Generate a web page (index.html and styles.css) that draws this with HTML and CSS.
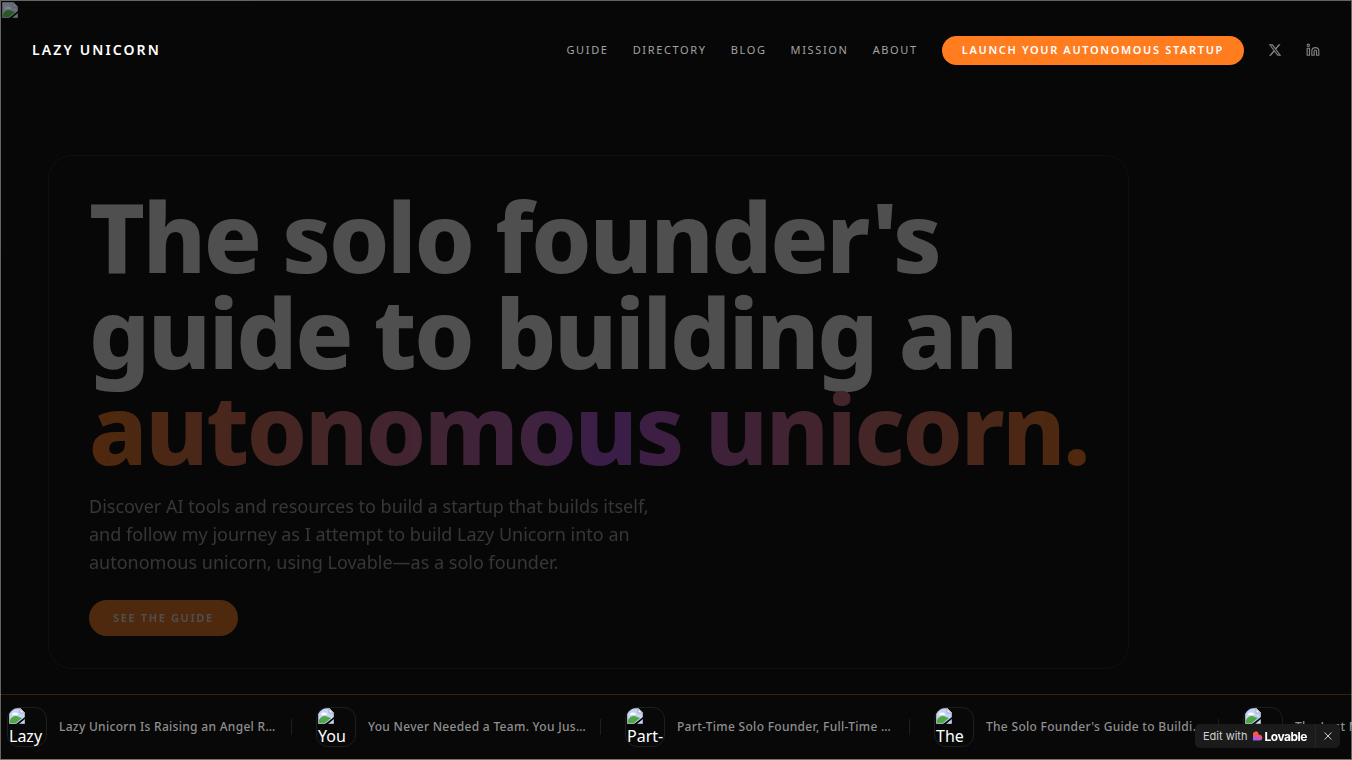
FILE: index.html
```
<!DOCTYPE html>
<html lang="en">
<head>
    <meta charset="UTF-8">
    <meta name="viewport" content="width=device-width, initial-scale=1.0">
    <title>Lazy Unicorn</title>
    <link rel="stylesheet" href="styles.css">
</head>
<body>

    <!-- Shared placeholder icon -->
    <svg class="defs" width="0" height="0" aria-hidden="true">
        <symbol id="broken" viewBox="0 0 16 16">
            <path d="M.5.5h11l4 4v11H.5z" fill="#c6d5f7" stroke="#a3abb8"/>
            <path d="M3 7c0-2 2-3 3-2 1-1 3 0 3 2z" fill="#fff"/>
            <path d="M1 15v-3c2-4 6-5 9-3l3 1-6 5z" fill="#4ea844"/>
            <path d="M11 .5V5h4.500z" fill="#fff" stroke="#a3abb8"/>
            <path d="M7 16 16 9v2l-6 5z" fill="#080808"/>
        </symbol>
    </svg>

    <div class="page">
        <div class="backdrop"><svg width="16" height="16"><use href="#broken"/></svg></div>

        <header class="header">
            <a class="logo" href="#">LAZY UNICORN</a>
            <nav class="nav">
                <a href="#">GUIDE</a>
                <a href="#">DIRECTORY</a>
                <a href="#">BLOG</a>
                <a href="#">MISSION</a>
                <a href="#">ABOUT</a>
                <button class="btn btn-launch">LAUNCH YOUR AUTONOMOUS STARTUP</button>
                <a class="social" href="#" aria-label="X">
                    <svg width="14" height="14" viewBox="0 0 24 24" fill="currentColor"><path d="M18.244 2.25h3.308l-7.227 8.26 8.502 11.24H16.17l-5.214-6.817L4.99 21.75H1.68l7.73-8.835L1.254 2.25H8.08l4.713 6.231zm-1.161 17.52h1.833L7.084 4.126H5.117z"/></svg>
                </a>
                <a class="social" href="#" aria-label="LinkedIn">
                    <svg width="14" height="14" viewBox="0 0 24 24" fill="none" stroke="currentColor" stroke-width="2" stroke-linecap="round" stroke-linejoin="round"><path d="M16 8a6 6 0 0 1 6 6v7h-4v-7a2 2 0 0 0-4 0v7h-4v-7a6 6 0 0 1 6-6z"/><rect x="2" y="9" width="4" height="12"/><circle cx="4" cy="4" r="2"/></svg>
                </a>
            </nav>
        </header>

        <main class="hero">
            <section class="hero-card">
                <h1>The solo founder's<br>guide to building an<br><span class="gradient">autonomous unicorn.</span></h1>
                <p>Discover AI tools and resources to build a startup that builds itself, and follow my journey as I attempt to build Lazy Unicorn into an autonomous unicorn, using Lovable—as a solo founder.</p>
                <button class="btn btn-guide">SEE THE GUIDE</button>
            </section>
        </main>

        <div class="ticker">
            <a class="post" href="#">
                <span class="thumb"><svg width="16" height="16"><use href="#broken"/></svg>Lazy</span>
                <span class="post-title">Lazy Unicorn Is Raising an Angel Round</span>
            </a>
            <a class="post" href="#">
                <span class="thumb"><svg width="16" height="16"><use href="#broken"/></svg>You</span>
                <span class="post-title">You Never Needed a Team. You Just Needed AI</span>
            </a>
            <a class="post" href="#">
                <span class="thumb"><svg width="16" height="16"><use href="#broken"/></svg>Part-</span>
                <span class="post-title">Part-Time Solo Founder, Full-Time Unicorn</span>
            </a>
            <a class="post" href="#">
                <span class="thumb"><svg width="16" height="16"><use href="#broken"/></svg>The</span>
                <span class="post-title">The Solo Founder's Guide to Building a Unicorn</span>
            </a>
            <a class="post" href="#">
                <span class="thumb"><svg width="16" height="16"><use href="#broken"/></svg>The</span>
                <span class="post-title">The Last Machine You Will Ever Need</span>
            </a>
        </div>
    </div>

    <div class="badge">
        <a href="#">Edit with
            <svg width="10" height="10" viewBox="0 0 10 10">
                <defs>
                    <linearGradient id="heart" x1="0.7" y1="0" x2="0.4" y2="1">
                        <stop offset="0.3" stop-color="#ff5a2b"/>
                        <stop offset="0.6" stop-color="#f04a9c"/>
                        <stop offset="1" stop-color="#7a6bff"/>
                    </linearGradient>
                </defs>
                <path d="M0 3.500a2.800 2.800 0 0 1 5.600-.6v.9h1.400a2.900 2.900 0 0 1 0 5.700H0z" fill="url(#heart)"/>
            </svg>
            <strong>Lovable</strong>
        </a>
        <button aria-label="Close">
            <svg width="8" height="8" viewBox="0 0 8 8" stroke="currentColor"><path d="M.5.5l7 7M7.500.5l-7 7"/></svg>
        </button>
    </div>

</body>
</html>
```
FILE: styles.css
```
* {
    box-sizing: border-box;
}
body {
    margin: 0;
    background: #070707;
    color: #fff;
    font-family: "Noto Sans", sans-serif;
}
a {
    color: inherit;
    text-decoration: none;
}
button {
    font-family: inherit;
    border: none;
    cursor: pointer;
}
svg {
    display: block;
}
.defs {
    position: absolute;
}
.page {
    position: relative;
    display: flex;
    flex-direction: column;
    min-height: 100vh;
    overflow: hidden;
}
.backdrop {
    position: absolute;
    inset: 0;
    padding: 1px;
    border: 1px solid #c0c0c0;
    opacity: 0.5;
    pointer-events: none;
}

/* Header */
.header {
    display: flex;
    align-items: center;
    justify-content: space-between;
    height: 100px;
    padding: 0 32px;
    position: relative;
}
.logo {
    font-size: 14px;
    font-weight: 600;
    line-height: 20px;
    letter-spacing: 0.15em;
}
.nav {
    display: flex;
    align-items: center;
    gap: 24px;
    font-size: 11px;
    line-height: 16px;
    letter-spacing: 0.15em;
    color: #a3a3a3;
}
.nav .social {
    color: #808080;
}
.btn {
    border-radius: 999px;
    background: #ff7c1f;
    color: #fff;
    font-size: 11px;
    font-weight: 600;
    letter-spacing: 0.15em;
    line-height: 16px;
}
.btn-launch {
    height: 29px;
    padding: 0 20px;
}
.btn-guide {
    height: 36px;
    padding: 0 24px;
}

/* Hero */
.hero {
    flex: 1;
    padding: 55px 48px 25px;
}
.hero-card {
    width: fit-content;
    padding: 32px 40px;
    border: 1px solid #101010;
    border-radius: 24px;
}
.hero-card > * {
    opacity: 0.29;
}
.hero h1 {
    margin: 0 0 16px;
    font-size: 96px;
    font-weight: 800;
    line-height: 1;
    letter-spacing: -0.024em;
}
.gradient {
    background: linear-gradient(90deg, #ff7a1a, #d9707f 25%, #c664c8 45%, #b855e8 52%, #d9707f 76%, #ff7a1a);
    background-clip: text;
    -webkit-background-clip: text;
    color: transparent;
}
.hero p {
    max-width: 576px;
    margin: 0 0 24px;
    font-size: 18px;
    line-height: 28px;
    color: #a8a8a8;
}

/* Ticker */
.ticker {
    display: flex;
    gap: 24px;
    padding: 12px 0 12px 7px;
    border-top: 1px solid #3b200f;
    border-bottom: 1px solid #3b200f;
    background: #080808;
}
.post {
    display: flex;
    flex: none;
    align-items: center;
    gap: 12px;
}
.post::after {
    content: "";
    width: 1px;
    height: 16px;
    background: #1e1e1e;
}
.thumb {
    width: 40px;
    height: 40px;
    padding-left: 1px;
    border: 1px solid #1e1e1e;
    border-radius: 12px;
    overflow: hidden;
    font-size: 16px;
    line-height: 24px;
}
.post-title {
    width: 220px;
    overflow: hidden;
    white-space: nowrap;
    text-overflow: ellipsis;
    font-size: 12px;
    font-weight: 500;
    line-height: 18px;
    letter-spacing: 0.025em;
    color: #8f8f8f;
}

/* Lovable badge */
.badge {
    position: fixed;
    right: 12px;
    bottom: 12px;
    display: flex;
    height: 24px;
    border-radius: 5px;
    background: #1b1b1b;
    color: #d0d0d0;
    font-family: Inter, sans-serif;
    font-size: 11px;
}
.badge a {
    display: flex;
    align-items: center;
    gap: 6px;
    padding: 0 8px;
}
.badge strong {
    margin-left: -5px;
    color: #fff;
    font-size: 12px;
    letter-spacing: -0.04em;
}
.badge button {
    width: 25px;
    padding: 0 8px;
    border-left: 1px solid #262626;
    background: none;
    color: #d0d0d0;
}
```
